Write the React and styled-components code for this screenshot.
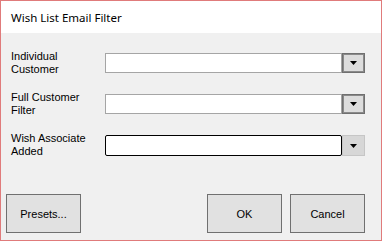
import React from "react";
import styled, { createGlobalStyle } from "styled-components";

const Global = createGlobalStyle`
  html, body { margin: 0; padding: 0; background: #ffffff; }
  * { box-sizing: border-box; }
`;

const Window = styled.div`
  width: 382px;
  height: 241px;
  border: 1px solid #e07b7b;
  display: flex;
  flex-direction: column;
  background: #f0f0f0;
`;

const TitleBar = styled.div`
  height: 32px;
  background: #ffffff;
  padding-left: 10px;
  display: flex;
  align-items: center;
  font-family: "Noto Sans", "Open Sans", sans-serif;
  font-size: 11.5px;
  color: #000;
`;

const Body = styled.div`
  flex: 1;
  display: flex;
  flex-direction: column;
  padding: 20px 16px 7px 4px;
`;

const Form = styled.div`
  display: flex;
  flex-direction: column;
  gap: 21px;
  padding-left: 6px;
`;

const Row = styled.div`
  display: flex;
  align-items: flex-start;
  height: 20px;
`;

const Label = styled.div`
  width: 94px;
  margin-top: -3px;
  font-family: "Liberation Sans", Arial, sans-serif;
  font-size: 11px;
  line-height: 13px;
  color: #000;
`;

const Combo = styled.div`
  flex: 1;
  display: flex;
  height: ${(p) => (p.$focused ? 21 : 20)}px;
`;

const Field = styled.div`
  flex: 1;
  background: #ffffff;
  border: 1px solid ${(p) => (p.$focused ? "#000" : "#a5a5a5")};
  border-radius: ${(p) => (p.$focused ? "2px" : "0")};
`;

const DropButton = styled.div`
  width: 23px;
  display: flex;
  align-items: center;
  justify-content: center;
  background: ${(p) => (p.$focused ? "#d7d7d7" : "#dddddd")};
  border: 1px solid ${(p) => (p.$focused ? "#c6c6c6" : "#707070")};
  box-shadow: ${(p) => (p.$focused ? "none" : "inset 0 0 0 1px #8a8a8a")};
`;

const Buttons = styled.div`
  margin-top: auto;
  display: flex;
  gap: 8px;
  padding-left: 1px;
`;

const Spacer = styled.div`
  flex: 1;
`;

const Button = styled.button`
  width: 75px;
  height: 39px;
  background: #e1e1e1;
  border: 1px solid #707070;
  font-family: "Liberation Sans", Arial, sans-serif;
  font-size: 11px;
  color: #000;
  padding: 0;
`;

const Arrow = () => (
  <svg width="7" height="4" viewBox="0 0 7 4">
    <path d="M0 0 H7 L3.5 4 Z" fill="#000" />
  </svg>
);

const rows = [
  { label: ["Individual", "Customer"] },
  { label: ["Full Customer", "Filter"] },
  { label: ["Wish Associate", "Added"], focused: true },
];

export default function App() {
  return (
    <>
      <Global />
      <Window>
        <TitleBar>Wish List Email Filter</TitleBar>
        <Body>
          <Form>
            {rows.map((r, i) => (
              <Row key={i}>
                <Label>
                  {r.label[0]}
                  <br />
                  {r.label[1]}
                </Label>
                <Combo $focused={r.focused}>
                  <Field $focused={r.focused} />
                  <DropButton $focused={r.focused}>
                    <Arrow />
                  </DropButton>
                </Combo>
              </Row>
            ))}
          </Form>
          <Buttons>
            <Button>Presets...</Button>
            <Spacer />
            <Button>OK</Button>
            <Button>Cancel</Button>
          </Buttons>
        </Body>
      </Window>
    </>
  );
}
